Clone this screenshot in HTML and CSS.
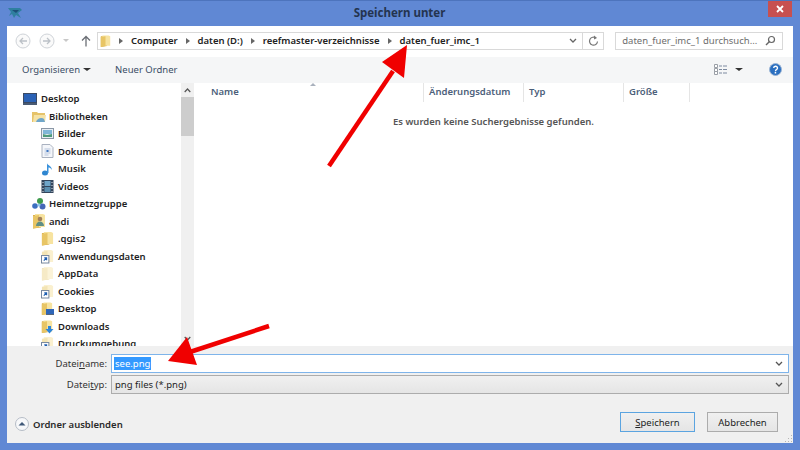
FILE: index.html
```html
<!DOCTYPE html>
<html lang="de">
<head>
    <meta charset="UTF-8">
    <title>Speichern unter</title>
    <link rel="stylesheet" href="styles.css">
</head>
<body>
    <svg class="defs" width="0" height="0">
        <symbol id="folder" viewBox="0 0 14 16">
            <path d="M1 2h6l2 1.500v11l-8 1z" fill="#d9ae4a"/>
            <path d="M3 1h8l2 1v12H3z" fill="#f7e3a0"/>
            <path d="M1 3l6-1v12.500l-6 1z" fill="#e8c565"/>
        </symbol>
        <symbol id="folder-pale" viewBox="0 0 14 16">
            <path d="M1 2h6l2 1.500v11l-8 1z" fill="#f0e2b8"/>
            <path d="M3 1h8l2 1v12H3z" fill="#fbf3d8"/>
            <path d="M1 3l6-1v12.500l-6 1z" fill="#f6eac6"/>
        </symbol>
        <symbol id="shortcut" viewBox="0 0 14 16">
            <path d="M3 1h8l2 1v12H3z" fill="#faf0cf"/>
            <path d="M1 3l6-1v12.500l-6 1z" fill="#f3e4b4"/>
            <rect x="0.500" y="7" width="8" height="8" fill="#fff" stroke="#6d7f99"/>
            <path d="M3 12.500l2.500-2.500M3.500 9.500h2.500v2.500" fill="none" stroke="#1f5fb0" stroke-width="1.300"/>
        </symbol>
    </svg>

    <div class="window">
        <div class="titlebar">
            <div class="title-left">
                <svg class="app-icon" width="16" height="14" viewBox="0 0 16 14">
                    <path d="M1 2h12l2 2-4 3 3 5-5-3-2 3-2-4-3 2 2-4z" fill="#2f7f9f"/>
                    <path d="M5 4h7l-3 3z" fill="#1d4f78"/>
                </svg>
            </div>
            <div class="title">Speichern unter</div>
            <div class="title-right">
                <div class="close">
                    <svg width="8" height="8" viewBox="0 0 8 8"><path d="M1 1l6 6M7 1L1 7" stroke="#fff" stroke-width="1.800"/></svg>
                </div>
            </div>
        </div>

        <div class="navbar">
            <div class="nav-btn">
                <svg width="16" height="16" viewBox="0 0 16 16"><circle cx="8" cy="8" r="7" fill="#fafafa" stroke="#cfd3d8"/><path d="M12 8H5M8 5L5 8l3 3" fill="none" stroke="#bcc1c7" stroke-width="1.300"/></svg>
            </div>
            <div class="nav-btn">
                <svg width="16" height="16" viewBox="0 0 16 16"><circle cx="8" cy="8" r="7" fill="#fafafa" stroke="#cfd3d8"/><path d="M4 8h7M8 5l3 3-3 3" fill="none" stroke="#bcc1c7" stroke-width="1.300"/></svg>
            </div>
            <div class="nav-drop"></div>
            <div class="nav-up">
                <svg width="10" height="12" viewBox="0 0 10 12"><path d="M5 11.500V1.500M1 5.500l4-4 4 4" fill="none" stroke="#6b6f75" stroke-width="1.300"/></svg>
            </div>
            <div class="address">
                <svg class="addr-folder" width="11" height="14"><use href="#folder"/></svg>
                <span class="crumb-sep"></span><span class="crumb">Computer</span>
                <span class="crumb-sep"></span><span class="crumb">daten (D:)</span>
                <span class="crumb-sep"></span><span class="crumb">reefmaster-verzeichnisse</span>
                <span class="crumb-sep"></span><span class="crumb">daten_fuer_imc_1</span>
                <svg class="addr-chev" width="8" height="6" viewBox="0 0 8 6"><path d="M1 1l3 3 3-3" fill="none" stroke="#666" stroke-width="1.300"/></svg>
            </div>
            <div class="refresh">
                <svg width="11" height="12" viewBox="0 0 11 12"><path d="M9.500 6.500a4 4 0 1 1-1.500-3.500" fill="none" stroke="#777" stroke-width="1.200"/><path d="M6 .5l3 2.500-3 1.500z" fill="#777"/></svg>
            </div>
            <div class="search">
                <span>daten_fuer_imc_1 durchsuch...</span>
                <svg width="11" height="11" viewBox="0 0 11 11"><circle cx="6.500" cy="4.500" r="3" fill="none" stroke="#666" stroke-width="1.200"/><path d="M4.500 6.500L1 10" stroke="#666" stroke-width="1.500"/></svg>
            </div>
        </div>

        <div class="toolbar">
            <span class="tool">Organisieren</span>
            <span class="tool-drop"></span>
            <span class="tool tool-new">Neuer Ordner</span>
            <svg class="view-icon" width="14" height="11" viewBox="0 0 14 11">
                <path d="M.5.500h3v3h-3zM.5 4.500h3v3h-3zM.5 7.500h3v3h-3z" fill="#fff" stroke="#9a9fa6"/>
                <path d="M5 2h3m1 0h4M5 5.500h3m1 0h4M5 9h3m1 0h4" stroke="#7c8aa0"/>
            </svg>
            <span class="tool-drop view-drop"></span>
            <svg class="help" width="13" height="13" viewBox="0 0 13 13">
                <circle cx="6.500" cy="6.500" r="6" fill="#2a6fc0" stroke="#9bb4d4"/>
                <path d="M4.700 5a1.900 1.800 0 1 1 2.700 1.700c-.7.400-.9.700-.9 1.500" fill="none" stroke="#fff" stroke-width="1.400"/>
                <rect x="5.700" y="9" width="1.500" height="1.500" fill="#fff"/>
            </svg>
        </div>

        <div class="main">
            <div class="tree">
                <div class="row lvl0">
                    <svg width="14" height="12" viewBox="0 0 14 12"><rect x=".5" y=".5" width="13" height="9" fill="#2b62b5" stroke="#3b4a63"/><rect x="0" y="10" width="14" height="2" fill="#4a5a72"/></svg>
                    Desktop
                </div>
                <div class="row lvl1">
                    <svg width="14" height="13" viewBox="0 0 14 13"><path d="M0 2h5l1 1h7v9H0z" fill="#e6c36a"/><path d="M2 5h12l-1 7H1z" fill="#f5e2a6"/><path d="M4 12c1-4 6-5 8-3l1 3z" fill="#6fa6c9"/></svg>
                    Bibliotheken
                </div>
                <div class="row lvl2">
                    <svg width="13" height="11" viewBox="0 0 13 11"><rect x=".5" y=".5" width="12" height="10" fill="#e9eef3" stroke="#8a97a6"/><rect x="2" y="2" width="9" height="4" fill="#7fb6d8"/><path d="M2 9V6l4 1 5-1v3z" fill="#4e9a7c"/></svg>
                    Bilder
                </div>
                <div class="row lvl2">
                    <svg width="13" height="14" viewBox="0 0 12 14"><path d="M.5.500h8l3 3v10H.5z" fill="#f4f6fa" stroke="#aab2c0"/><path d="M3 5h6M3 7h6M3 9h6M3 11h4" stroke="#b5c4dc"/><rect x="5" y="6" width="2" height="2" fill="#3f78c4"/></svg>
                    Dokumente
                </div>
                <div class="row lvl2">
                    <svg width="13" height="14" viewBox="0 0 12 14"><ellipse cx="3.500" cy="11" rx="3" ry="2.500" fill="#2f86d0"/><path d="M5.500 11V1c0 2 5 3 5 7-1-2-3-2.500-3.500-2.500V11z" fill="#3a92dc"/></svg>
                    Musik
                </div>
                <div class="row lvl2">
                    <svg width="13" height="13" viewBox="0 0 12 13"><rect width="12" height="13" fill="#34465c"/><rect x="3" y="1" width="6" height="5" fill="#6fa6c9"/><rect x="3" y="7" width="6" height="5" fill="#5b8fb0"/><path d="M1 2h1v1H1zM1 5h1v1H1zM1 8h1v1H1zM1 11h1v1H1zM10 2h1v1h-1zM10 5h1v1h-1zM10 8h1v1h-1zM10 11h1v1h-1z" fill="#dfe6ee"/></svg>
                    Videos
                </div>
                <div class="row lvl1">
                    <svg width="14" height="13" viewBox="0 0 14 13"><circle cx="3" cy="9" r="2.800" fill="#3c6fc0"/><circle cx="8" cy="4" r="3" fill="#3e9a4c"/><circle cx="10.500" cy="9.500" r="3" fill="#4566b8"/><circle cx="7" cy="8" r="1.500" fill="#8fc8e8"/></svg>
                    Heimnetzgruppe
                </div>
                <div class="row lvl1">
                    <svg width="14" height="16" viewBox="0 0 14 16"><use href="#folder"/><circle cx="8" cy="6" r="2.300" fill="#a07f5a"/><path d="M4 13c0-3 2-4.500 4-4.500s4 1.500 4 4.500z" fill="#5f8f86"/></svg>
                    andi
                </div>
                <div class="row lvl2"><svg width="13" height="15"><use href="#folder"/></svg>.qgis2</div>
                <div class="row lvl2"><svg width="13" height="15"><use href="#shortcut"/></svg>Anwendungsdaten</div>
                <div class="row lvl2"><svg width="13" height="15"><use href="#folder-pale"/></svg>AppData</div>
                <div class="row lvl2"><svg width="13" height="15"><use href="#shortcut"/></svg>Cookies</div>
                <div class="row lvl2">
                    <svg width="13" height="15" viewBox="0 0 13 15"><use href="#folder" width="12" height="15"/><rect x="5" y="8" width="8" height="5" fill="#2f66b8"/><rect x="5" y="13" width="8" height="1" fill="#55657c"/></svg>
                    Desktop
                </div>
                <div class="row lvl2">
                    <svg width="13" height="15" viewBox="0 0 13 15"><use href="#folder" width="12" height="15"/><path d="M7 7h3v3h2.500l-4 4.500-4-4.500H7z" fill="#2f86d8"/></svg>
                    Downloads
                </div>
                <div class="row lvl2"><svg width="13" height="15"><use href="#shortcut"/></svg>Druckumgebung</div>
            </div>

            <div class="scrollbar">
                <svg class="scroll-up" width="7" height="5" viewBox="0 0 7 5"><path d="M.7 4l2.800-3 2.800 3" fill="none" stroke="#555" stroke-width="1.200"/></svg>
                <div class="thumb"></div>
                <svg class="scroll-down" width="7" height="5" viewBox="0 0 7 5"><path d="M.7 1l2.800 3 2.800-3" fill="none" stroke="#555" stroke-width="1.200"/></svg>
            </div>

            <div class="files">
                <div class="head">
                    <div class="col col-name">Name</div>
                    <div class="col col-date">Änderungsdatum</div>
                    <div class="col col-type">Typ</div>
                    <div class="col col-size">Größe</div>
                </div>
                <p class="empty">Es wurden keine Suchergebnisse gefunden.</p>
            </div>
        </div>

        <div class="bottom">
            <div class="field">
                <label class="field-label">Datei<u>n</u>ame:</label>
                <div class="input">
                    <span class="selected">see.png</span>
                    <svg width="8" height="6" viewBox="0 0 8 6"><path d="M1 1l3 3 3-3" fill="none" stroke="#555" stroke-width="1.300"/></svg>
                </div>
            </div>
            <div class="field">
                <label class="field-label">Datei<u>t</u>yp:</label>
                <div class="select">
                    <span>png files (*.png)</span>
                    <svg width="8" height="6" viewBox="0 0 8 6"><path d="M1 1l3 3 3-3" fill="none" stroke="#555" stroke-width="1.300"/></svg>
                </div>
            </div>
            <div class="actions">
                <div class="hide-folders">
                    <svg width="14" height="14" viewBox="0 0 14 14"><circle cx="7" cy="7" r="6.500" fill="#f7f8fa" stroke="#b5bcc6"/><path d="M3.500 8.500L7 5l3.500 3.500z" fill="#3f5878"/></svg>
                    Ordner ausblenden
                </div>
                <div class="btn btn-default"><span><u>S</u>peichern</span></div>
                <div class="btn">Abbrechen</div>
            </div>
            <svg class="grip" width="9" height="9" viewBox="0 0 9 9"><path d="M7 1h1v1H7zM4 4h1v1H4zM7 4h1v1H7zM1 7h1v1H1zM4 7h1v1H4zM7 7h1v1H7z" fill="#b5b5b5"/></svg>
        </div>
    </div>

    <!-- rote Pfeile ueber dem Dialog -->
    <svg class="arrows" width="800" height="450" viewBox="0 0 800 450">
        <path d="M329 166L393 71" stroke="#f00000" stroke-width="4.500"/>
        <path d="M407 45L382 62L404 78z" fill="#f00000"/>
        <path d="M269 326L190 352" stroke="#f00000" stroke-width="4.500"/>
        <path d="M168 361L187 337L197 365z" fill="#f00000"/>
    </svg>
</body>
</html>
```

FILE: styles.css
```css
* {
    box-sizing: border-box;
}
body {
    margin: 0;
    font-family: 'Noto Sans', sans-serif;
    font-size: 9.5px;
    color: #1e1e1e;
    overflow: hidden;
}
.defs {
    position: absolute;
}
.arrows {
    position: absolute;
    left: 0;
    top: 0;
}
.window {
    width: 800px;
    height: 450px;
    display: flex;
    flex-direction: column;
    padding: 0 7px 7px;
    background: #6088d4;
    border: 1px solid #4d74bd;
    border-width: 1px 0 0;
}
.titlebar {
    height: 25px;
    flex: none;
    display: grid;
    grid-template-columns: 1fr auto 1fr;
    margin: 0 1px 0 0;
}
.title-left {
    padding-top: 5px;
}
.title {
    font-size: 11.5px;
    font-weight: 700;
    color: #24344f;
    line-height: 24px;
}
.title-right {
    display: flex;
    justify-content: flex-end;
}
.close {
    width: 24px;
    height: 16px;
    background: #c75050;
    display: flex;
    align-items: center;
    justify-content: center;
}

.navbar {
    height: 31px;
    flex: none;
    background: #fff;
    display: flex;
    align-items: center;
    padding: 0 10px 2px 8px;
}
.nav-btn {
    width: 16px;
    height: 16px;
    margin-right: 8px;
    display: flex;
}
.nav-drop {
    width: 0;
    height: 0;
    margin: 0 7px 0 0;
    border: 3px solid transparent;
    border-top-color: #c8c8c8;
    border-bottom-width: 0;
}
.nav-up {
    width: 10px;
    display: flex;
    margin: 0 6px 0 5px;
}
.address {
    width: 487px;
    height: 18px;
    border: 1px solid #d9d9d9;
    display: flex;
    align-items: center;
    font-weight: 600;
    color: #222;
    padding-left: 2px;
}
.addr-folder {
    flex: none;
}
.crumb-sep {
    width: 0;
    height: 0;
    margin: 0 8px;
    border: 3px solid transparent;
    border-left: 4px solid #666;
    border-right-width: 0;
}
.addr-chev {
    margin-left: auto;
    margin-right: 5px;
}
.refresh {
    width: 21px;
    height: 18px;
    border: 1px solid #d9d9d9;
    border-left: 0;
    display: flex;
    align-items: center;
    justify-content: center;
}
.search {
    width: 168px;
    height: 18px;
    margin-left: 11px;
    border: 1px solid #d9d9d9;
    display: flex;
    align-items: center;
    justify-content: space-between;
    padding: 0 6px 0 6px;
    color: #6d6d6d;
    white-space: nowrap;
}

.toolbar {
    height: 26px;
    flex: none;
    background: #f5f6f7;
    display: flex;
    align-items: center;
    padding: 0 0 2px 15px;
    color: #3a4d66;
}
.tool-drop {
    width: 0;
    height: 0;
    margin-left: 3px;
    border: 3px solid transparent;
    border-top: 3px solid #333;
    border-bottom-width: 0;
    border-left-width: 4px;
    border-right-width: 4px;
}
.tool-new {
    margin-left: 24px;
}
.view-icon {
    margin-left: auto;
}
.view-drop {
    margin-left: 7px;
}
.help {
    margin: 0 11px 0 26px;
}

.main {
    height: 263px;
    flex: none;
    background: #fff;
    display: flex;
    overflow: hidden;
}
.tree {
    width: 174px;
    flex: none;
    padding-top: 7px;
    font-weight: 600;
}
.row {
    height: 17.5px;
    display: flex;
    align-items: center;
    gap: 4px;
    white-space: nowrap;
}
.row svg {
    flex: none;
}
.lvl0 {
    padding-left: 16px;
}
.lvl1 {
    padding-left: 25px;
    gap: 3px;
}
.lvl2 {
    padding-left: 34px;
}
.scrollbar {
    width: 13px;
    flex: none;
    background: #f0f0f0;
    display: flex;
    flex-direction: column;
    align-items: center;
    padding-top: 5px;
}
.thumb {
    width: 100%;
    height: 39px;
    margin-top: 4px;
    background: #cdcdcd;
}
.scroll-down {
    margin-top: auto;
    margin-bottom: 5px;
}
.files {
    flex: 1;
    position: relative;
}
.head {
    height: 19px;
    display: flex;
    font-weight: 600;
    color: #4c607a;
}
.col {
    padding: 2px 0 0 5px;
    border-right: 1px solid #e5e5e5;
}
.col-name {
    width: 230px;
    padding-left: 17px;
    position: relative;
}
.col-name::after {
    content: "";
    position: absolute;
    left: 116px;
    top: 0;
    border: 3px solid transparent;
    border-bottom: 3px solid #a9b1bd;
    border-top-width: 0;
}
.col-date,
.col-type {
    width: 100px;
}
.col-size {
    width: 66px;
}
.empty {
    margin: 13px 0 0;
    width: 599px;
    text-align: center;
    font-weight: 600;
    color: #555;
}

.bottom {
    flex: 1;
    background: #f0f0f0;
    padding-top: 8px;
    position: relative;
}
.field {
    height: 21px;
    display: flex;
    align-items: flex-start;
    padding-right: 4px;
}
.field-label {
    width: 100px;
    text-align: right;
    line-height: 19px;
    color: #333;
    margin-right: 4px;
}
.input,
.select {
    flex: 1;
    height: 19px;
    display: flex;
    align-items: center;
    justify-content: space-between;
    padding: 0 5px 0 2px;
}
.input {
    background: #fff;
    border: 1px solid #7eb4ea;
}
.select {
    background: linear-gradient(#f0f0f0, #e5e5e5);
    border: 1px solid #acacac;
    padding-left: 3px;
}
.selected {
    background: #3399ff;
    color: #fff;
    padding: 0 1px;
}
.actions {
    display: flex;
    align-items: center;
    margin-top: 16px;
    padding-right: 15px;
}
.hide-folders {
    display: flex;
    align-items: center;
    gap: 4px;
    padding: 4px 0 0 8px;
    margin-right: auto;
    font-weight: 600;
    color: #2a2a2a;
}
.btn {
    width: 71px;
    height: 20px;
    margin-left: 12px;
    border: 1px solid #acacac;
    background: linear-gradient(#f0f0f0, #e5e5e5);
    display: flex;
    align-items: center;
    justify-content: center;
    color: #222;
}
.btn-default {
    width: 75px;
    border-color: #5ba4e0;
}
.grip {
    position: absolute;
    right: 0;
    bottom: 0;
}
```
